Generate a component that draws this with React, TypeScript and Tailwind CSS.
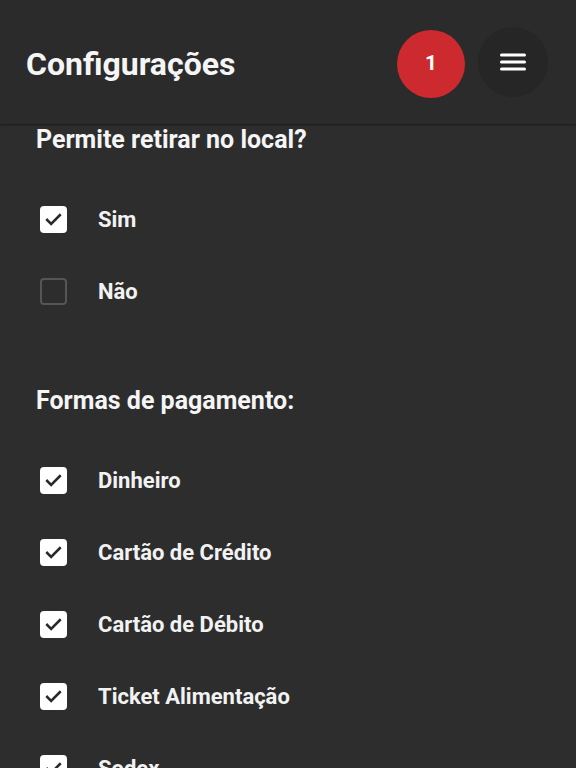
import { useState } from "react";

const pagamentos = [
  "Dinheiro",
  "Cartão de Crédito",
  "Cartão de Débito",
  "Ticket Alimentação",
  "Sodex",
];

function CheckBox({ checked }: { checked: boolean }) {
  if (!checked) {
    return <div className="w-[27px] h-[27px] rounded-[4px] border-2 border-[#555555]" />;
  }
  return (
    <div className="w-[27px] h-[27px] rounded-[4px] bg-white flex items-center justify-center">
      <svg width="19" height="19" viewBox="0 0 24 24" fill="none">
        <path d="M4 12.5l5 5 11-11" stroke="#2a2a2a" strokeWidth="3.2" strokeLinecap="square" />
      </svg>
    </div>
  );
}

function Row({ label, checked, onToggle }: { label: string; checked: boolean; onToggle: () => void }) {
  return (
    <button onClick={onToggle} className="h-[72px] flex items-center w-full text-left">
      <div className="w-[62px] pl-[4px] shrink-0">
        <CheckBox checked={checked} />
      </div>
      <span className="text-[22px] font-bold text-[#f2f2f2]">{label}</span>
    </button>
  );
}

export default function App() {
  const [retirar, setRetirar] = useState(true);
  const [formas, setFormas] = useState<boolean[]>(pagamentos.map(() => true));

  return (
    <div className="min-h-screen bg-[#2d2d2d] font-['Roboto',sans-serif] overflow-hidden h-[768px]">
      {/* Header */}
      <header className="h-[124px] bg-[#2b2b2b] flex items-center pl-[26px] pr-[28px] shadow-[0_1px_2px_rgba(0,0,0,0.45)] relative">
        <h1 className="text-[32px] font-bold text-[#f5f5f5] flex-1 mt-[4px]">Configurações</h1>
        <div className="w-[68px] h-[68px] rounded-full bg-[#cd2a2f] flex items-center justify-center text-white text-[21px] font-bold mt-[4px]">
          1
        </div>
        <div className="w-[70px] h-[70px] rounded-full bg-[#262626] ml-[13px] flex items-center justify-center">
          <svg width="26" height="20" viewBox="0 0 26 20">
            <rect x="0" y="1.5" width="26" height="3" rx="1.5" fill="#fff" />
            <rect x="0" y="8.5" width="26" height="3" rx="1.5" fill="#fff" />
            <rect x="0" y="15.5" width="26" height="3" rx="1.5" fill="#fff" />
          </svg>
        </div>
      </header>

      {/* Conteúdo */}
      <main className="pl-[36px]">
        <h2 className="h-[32px] flex items-center text-[25px] font-bold text-[#f5f5f5]">Permite retirar no local?</h2>
        <div className="mt-[27px]">
          <Row label="Sim" checked={retirar} onToggle={() => setRetirar(true)} />
          <Row label="Não" checked={!retirar} onToggle={() => setRetirar(false)} />
        </div>

        <h2 className="mt-[58px] h-[32px] flex items-center text-[25px] font-bold text-[#f5f5f5]">Formas de pagamento:</h2>
        <div className="mt-[27px]">
          {pagamentos.map((p, i) => (
            <Row
              key={p}
              label={p}
              checked={formas[i]}
              onToggle={() => setFormas(formas.map((v, j) => (j === i ? !v : v)))}
            />
          ))}
        </div>
      </main>
    </div>
  );
}
